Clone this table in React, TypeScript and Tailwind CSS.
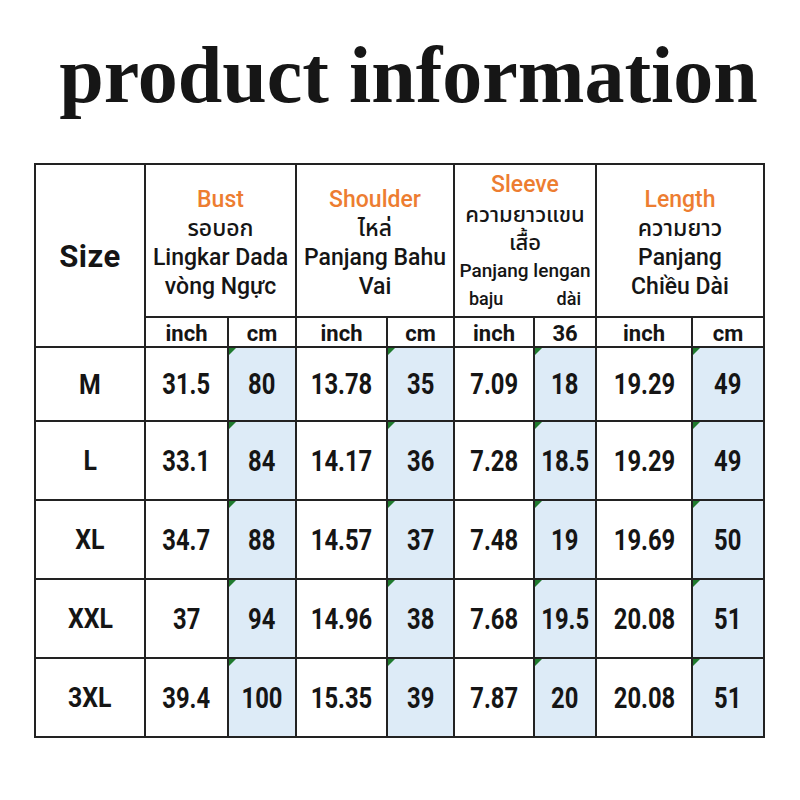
import React from "react";

const font = { fontFamily: "Roboto, 'Noto Sans', 'Noto Sans Thai', 'DejaVu Sans', sans-serif" };

const rows: [string, string, string, string, string, string, string, string, string][] = [
  ["M", "31.5", "80", "13.78", "35", "7.09", "18", "19.29", "49"],
  ["L", "33.1", "84", "14.17", "36", "7.28", "18.5", "19.29", "49"],
  ["XL", "34.7", "88", "14.57", "37", "7.48", "19", "19.69", "50"],
  ["XXL", "37", "94", "14.96", "38", "7.68", "19.5", "20.08", "51"],
  ["3XL", "39.4", "100", "15.35", "39", "7.87", "20", "20.08", "51"],
];

function Cell({ children, blue, label }: { children: React.ReactNode; blue?: boolean; label?: boolean }) {
  return (
    <div
      className={
        "relative flex items-center justify-center pt-[2px] font-bold text-[#151515] " +
        (blue ? "bg-[#ddebf7] " : "bg-white ") +
        (label ? "text-[27px]" : "text-[29px]")
      }
    >
      {blue && (
        <svg className="absolute left-0 top-0" width="7" height="7" viewBox="0 0 7 7">
          <polygon points="0,0 7,0 0,7" fill="#1f7a2e" />
        </svg>
      )}
      <span className={label ? "inline-block scale-x-[0.92]" : "inline-block scale-x-[0.82]"}>{children}</span>
    </div>
  );
}

function Head({ title, lines }: { title: string; lines: string[] }) {
  return (
    <div className="col-span-2 flex flex-col items-center justify-center bg-white pt-[4px] text-[23px] font-medium leading-[29px] text-[#151515]">
      <div className="text-[#ed7d31]">{title}</div>
      {lines.map((l) => (
        <div key={l}>{l}</div>
      ))}
    </div>
  );
}

export default function App() {
  return (
    <div className="h-[800px] w-[800px] bg-white" style={font}>
      <div className="h-[163px] pt-[35px] pl-[17px] text-center">
        <div
          className="text-[80px] font-bold leading-none text-[#161616]"
          style={{ fontFamily: "'Liberation Serif', 'Times New Roman', serif" }}
        >
          product information
        </div>
      </div>
      <div className="ml-[34px] grid w-[731px] grid-cols-[108px_81px_66px_89px_65px_78px_60px_94px_70px] grid-rows-[151px_28px_72px_77px_77px_77px_77px] gap-[2px] bg-[#222] p-[2px]">
        <div className="row-span-2 flex items-center justify-center bg-white pt-[4px] text-[31px] font-bold tracking-[0.5px] text-[#151515]">
          Size
        </div>
        <Head title="Bust" lines={["รอบอก", "Lingkar Dada", "vòng Ngực"]} />
        <Head title="Shoulder" lines={["ไหล่", "Panjang Bahu", "Vai"]} />
        <div className="col-span-2 flex flex-col items-center bg-white pt-[6px] text-[22px] font-medium leading-[28px] text-[#151515]">
          <div className="text-[23px] text-[#ed7d31]">Sleeve</div>
          <div className="mt-[2px]">ความยาวแขน</div>
          <div>เสื้อ</div>
          <div className="text-[19px]">Panjang lengan</div>
          <div className="flex w-full justify-between px-[14px] text-[18px]">
            <span>baju</span>
            <span>dài</span>
          </div>
        </div>
        <Head title="Length" lines={["ความยาว", "Panjang", "Chiều Dài"]} />
        {["inch", "cm", "inch", "cm", "inch", "36", "inch", "cm"].map((t, i) => (
          <div key={i} className="flex items-center justify-center bg-white pt-[2px] text-[22px] font-bold text-[#151515]">
            {t}
          </div>
        ))}
        {rows.map((r) =>
          r.map((v, i) => (
            <Cell key={r[0] + i} blue={i > 0 && i % 2 === 0} label={i === 0}>
              {v}
            </Cell>
          ))
        )}
      </div>
    </div>
  );
}
